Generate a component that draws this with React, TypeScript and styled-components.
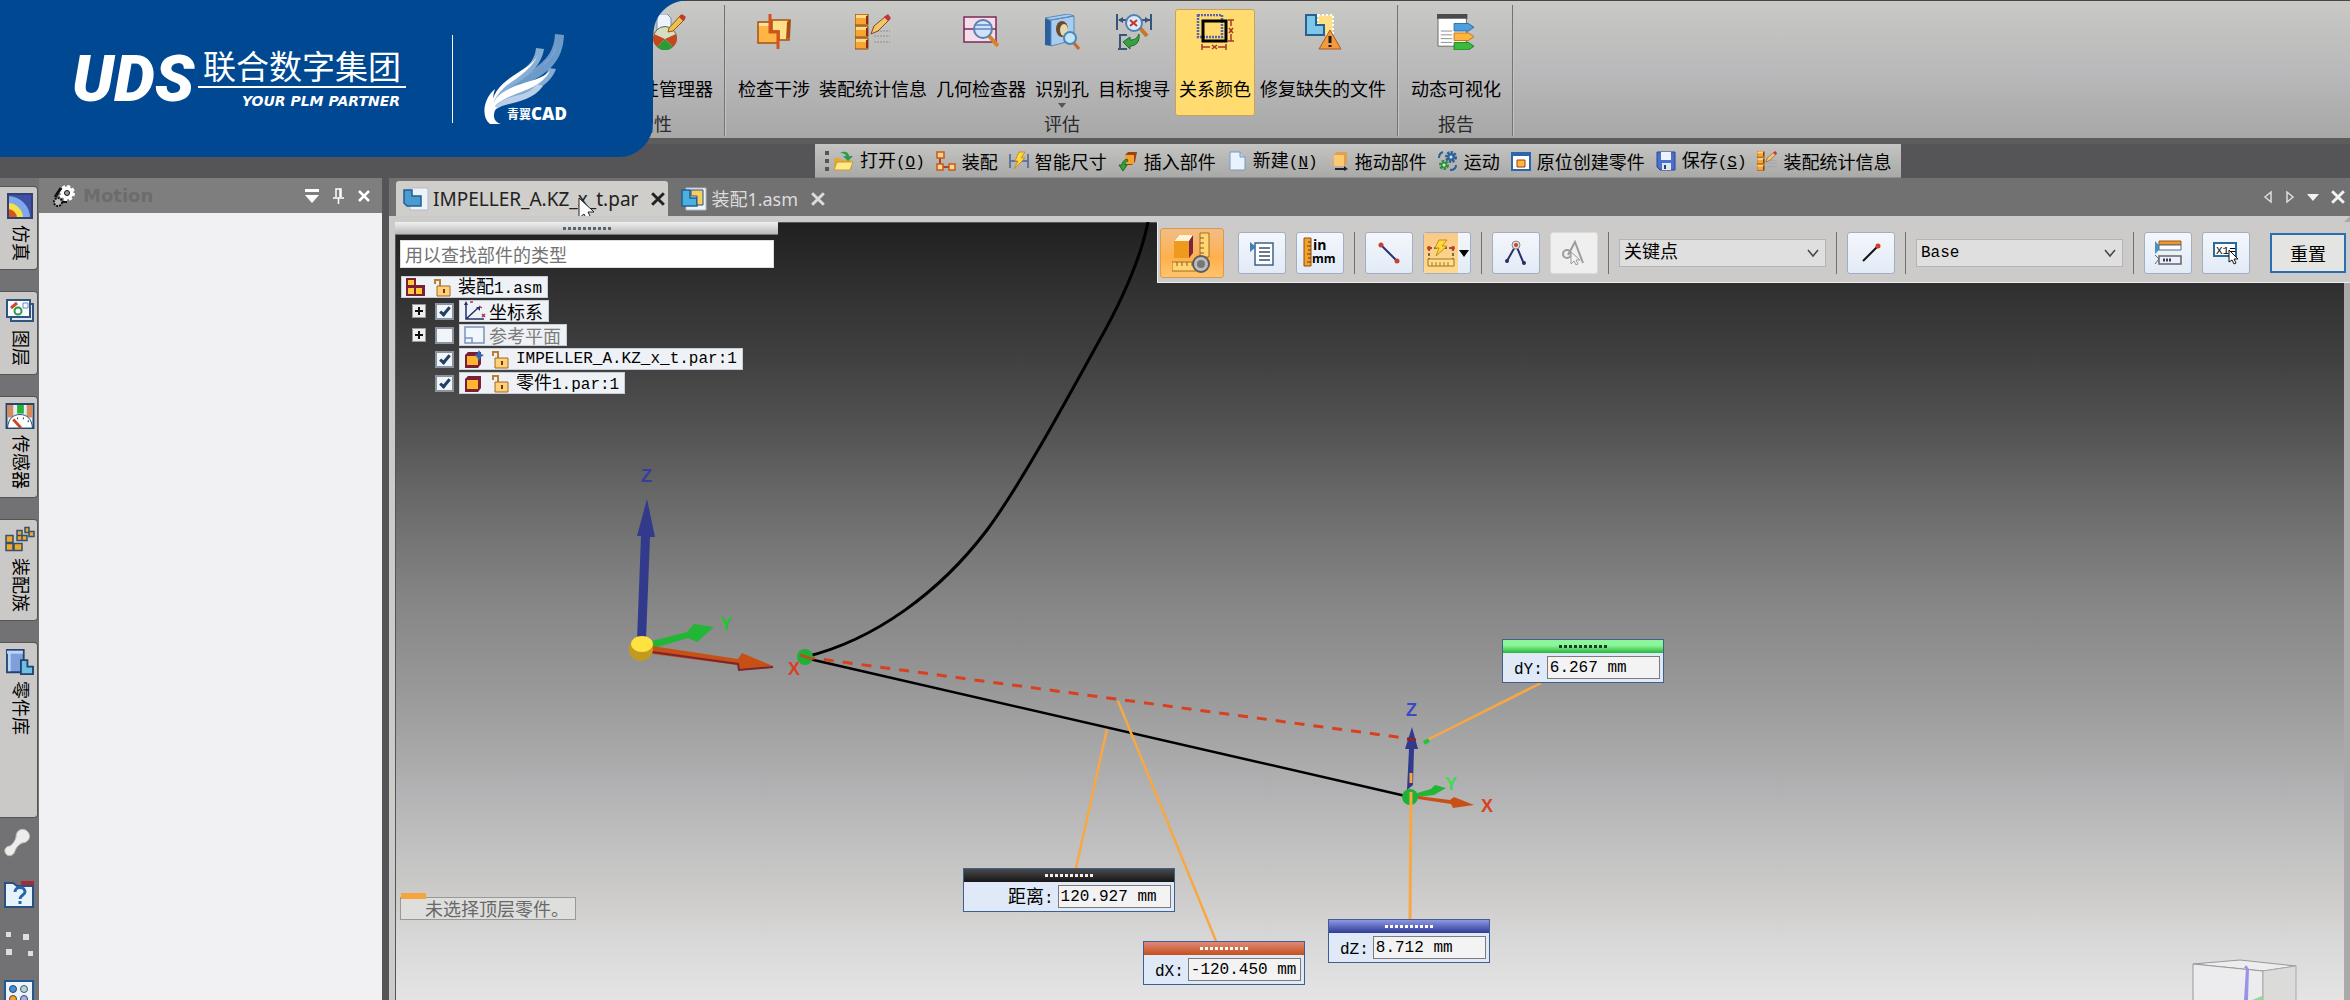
import React from "react";
import styled, { createGlobalStyle, css } from "styled-components";

const UI = `"Noto Sans CJK SC", sans-serif`;
const MONO = `"Liberation Mono", "Noto Sans CJK SC", monospace`;

const GlobalStyle = createGlobalStyle`
  *, *::before, *::after { box-sizing: border-box; }
  body { margin: 0; font-family: ${UI}; font-size: 18px; line-height: 24px; color: #000; }
  button, input, select { font: inherit; color: inherit; margin: 0; }
  button { border: 0; background: none; padding: 0; cursor: default; }
  svg { display: block; flex: none; }
`;

/* ---------- frame ---------- */
const Shell = styled.div`
  position: relative;
  display: flex;
  flex-direction: column;
  height: 100vh;
  overflow: hidden;
  background: #555557;
`;
const Mono = styled.span`
  font-family: ${MONO};
  font-size: 16px;
`;

/* ---------- brand banner ---------- */
const Banner = styled.header`
  position: absolute;
  z-index: 5;
  top: 0;
  left: 0;
  width: 653px;
  height: 157px;
  padding-left: 72px;
  display: flex;
  align-items: center;
  background: #004891;
  border-bottom-right-radius: 34px;
  color: #fff;
  &::after {
    content: "";
    position: absolute;
    top: 0;
    left: 100%;
    width: 34px;
    height: 34px;
    background: radial-gradient(circle at 100% 100%, transparent 33px, #004891 34px);
  }
`;
const Uds = styled.strong`
  width: 126px;
  font: italic 900 65px/72px Roboto, "Liberation Sans", sans-serif;
`;
const Company = styled.div`
  width: 208px;
  text-align: center;
`;
const CompanyName = styled.div`
  font-size: 33px;
  line-height: 42px;
  border-bottom: 2px solid #fff;
`;
const Slogan = styled.div`
  padding-right: 6px;
  text-align: right;
  white-space: nowrap;
  font: italic 700 14px/26px "DejaVu Sans", sans-serif;
`;
const BannerRule = styled.div`
  width: 1px;
  height: 88px;
  margin: 0 30px 0 46px;
  background: #fff;
`;
const CadLogo = styled.div`
  position: relative;
`;
const CadName = styled.div`
  position: absolute;
  left: 24px;
  bottom: 2px;
  display: flex;
  align-items: center;
  white-space: nowrap;
  font-size: 12px;
  font-weight: 700;
  line-height: 18px;
  b { font: 800 17px/18px "Open Sans", sans-serif; }
`;

/* ---------- ribbon ---------- */
const Ribbon = styled.nav`
  display: flex;
  flex: none;
  height: 144px;
  padding: 4px 0 2px 584px;
  border-top: 1px solid #4a4446;
  border-bottom: 6px solid #5c5c5d;
  background: linear-gradient(#c9c9c6, #bfbfbe 30%, #b8b8ba 55%, #a7a7a6);
`;
const Group = styled.section<{ $first?: boolean }>`
  display: flex;
  flex-direction: column;
  align-items: center;
  padding: 4px 7px 0 9px;
  border-right: 1px solid #747474;
  box-shadow: 1px 0 #c4c4c4;
  ${(p) => p.$first && css`width: 141px; padding: 4px 7px 0; > div { align-self: flex-end; }`}
`;
const GroupItems = styled.div`
  display: flex;
  gap: 1px;
`;
const GroupLabel = styled.h2`
  margin: -2px 0 0;
  font-size: 18px;
  font-weight: 400;
  line-height: 18px;
  color: #2b2b2b;
`;
const RibbonButton = styled.button<{ $on?: boolean }>`
  display: flex;
  flex-direction: column;
  align-items: center;
  height: 107px;
  padding: 4px 3px 0;
  border: 1px solid transparent;
  border-radius: 3px;
  white-space: nowrap;
  ${(p) => p.$on && css`background: #ffdb70; border-color: #c9a15c;`}
  > svg { height: 36px; }
  > span { margin-top: 26px; }
`;
const DropMark = styled.i`
  margin-top: 3px;
  border: 4px solid transparent;
  border-top: 5px solid #555;
  border-bottom: 0;
`;

/* ---------- quick access bar ---------- */
const QuickRow = styled.div`
  display: flex;
  flex: none;
  padding-left: 815px;
`;
const QuickBar = styled.div`
  display: flex;
  align-items: center;
  gap: 11px;
  height: 34px;
  padding: 0 10px;
  background: linear-gradient(#c4c4c2, #a9a9a7);
  border-bottom: 1px solid #8d8d8d;
`;
const Grip = styled.i`
  width: 4px;
  height: 20px;
  margin-right: -6px;
  background: repeating-linear-gradient(#555 0 4px, transparent 4px 8px);
`;
const QuickButton = styled.button`
  display: flex;
  align-items: center;
  gap: 6px;
  white-space: nowrap;
`;

/* ---------- side strip ---------- */
const Body = styled.div`
  display: flex;
  flex: 1;
  min-height: 0;
`;
const Strip = styled.aside`
  display: flex;
  flex-direction: column;
  flex: none;
  gap: 21px;
  width: 39px;
  padding-top: 8px;
  background: #727274;
`;
const StripTab = styled.button<{ $tall?: boolean }>`
  display: flex;
  flex-direction: column;
  align-items: center;
  flex: none;
  gap: 6px;
  width: 38px;
  padding: 6px 2px 8px 4px;
  border: 1px solid #555;
  border-left: 0;
  border-radius: 0 4px 4px 0;
  background: #cbc9c8;
  ${(p) => p.$tall && css`padding-bottom: 82px;`}
  svg { height: 26px; }
  span { margin-left: 4px; writing-mode: vertical-rl; text-orientation: sideways; }
`;
const StripTools = styled.div`
  display: flex;
  flex-direction: column;
  align-items: flex-start;
  gap: 22px;
  margin-top: -11px;
  padding-left: 4px;
`;
const Panel = styled.section`
  flex: none;
  width: 343px;
  background: #f1f1f3;
`;
const PanelHead = styled.div`
  display: flex;
  align-items: center;
  gap: 14px;
  height: 35px;
  padding: 0 12px 0 14px;
  background: #7e7e7e;
  color: #fff;
  h2 {
    flex: 1;
    margin: 0 0 0 -6px;
    font: 700 18px/24px "DejaVu Sans", sans-serif;
    color: #6c6c6d;
  }
`;
const Splitter = styled.div`
  flex: none;
  width: 7px;
  background: #555557;
`;

/* ---------- documents ---------- */
const Docs = styled.main`
  display: flex;
  flex-direction: column;
  flex: 1;
  min-width: 0;
`;
const DocTabs = styled.div`
  display: flex;
  align-items: flex-end;
  flex: none;
  height: 38px;
  padding-left: 7px;
  background: #717172;
`;
const DocTab = styled.div<{ $on?: boolean }>`
  position: relative;
  display: flex;
  align-items: center;
  gap: 4px;
  height: 35px;
  padding: 0 3px 0 13px;
  border-radius: 3px 3px 0 0;
  color: #dcdcdc;
  font-family: "Noto Sans", "Noto Sans CJK SC", sans-serif;
  font-size: 18px;
  ${(p) => p.$on && css`padding-left: 7px; background: #cfcecb; color: #222; font-size: 19px;`}
  > button:last-of-type { margin-left: 9px; }
`;
const Pointer = styled.svg`
  position: absolute;
  left: 182px;
  top: 16px;
`;
const TabNav = styled.div`
  display: flex;
  align-items: center;
  align-self: center;
  gap: 12px;
  margin-left: auto;
  padding-right: 5px;
`;
const Frame = styled.div`
  position: relative;
  flex: 1;
  min-height: 0;
  border: 6px solid #cbcbc9;
  border-right-color: #a9a9a9;
  border-bottom: 0;
  box-shadow: inset 1px 1px #555;
  background: linear-gradient(
    #202021, #333 10%, #3f3f40 17%, #4b4b4c 23%, #565657 28%, #656566 34%, #757576 41%,
    #868687 49%, #939393 57%, #a2a2a2 65%, #b2b2b4 73%, #bebebe 79%, #cccbca 86%, #dcdbdb 94%, #e4e4e4
  );
`;
const Scene = styled.svg`
  position: absolute;
  inset: 0;
  width: 100%;
  height: 100%;
`;

/* ---------- model tree ---------- */
const Tree = styled.div`
  position: relative;
  width: 383px;
`;
const TreeHandle = styled.div`
  display: flex;
  align-items: center;
  justify-content: center;
  height: 13px;
  border-bottom: 1px solid #777;
  background: linear-gradient(#f0f0f0, #b9b9b9);
`;
const Dots = styled.i<{ $color: string }>`
  width: 48px;
  height: 3px;
  background: repeating-linear-gradient(90deg, ${(p) => p.$color} 0 3px, transparent 3px 5px);
`;
const Search = styled.input`
  display: block;
  width: 374px;
  height: 28px;
  margin: 5px 0 8px 5px;
  padding: 0 4px;
  border: 1px solid #ddd;
  background: #fff;
  &::placeholder { color: #737373; opacity: 1; }
`;
const Rows = styled.ul`
  display: flex;
  flex-direction: column;
  gap: 2px;
  margin: 0;
  padding: 0 0 0 6px;
  list-style: none;
`;
const Row = styled.li<{ $depth?: number }>`
  display: flex;
  align-items: center;
  height: 22px;
  padding-left: ${(p) => (p.$depth ?? 0) * 11}px;
`;
const Expand = styled.button`
  position: relative;
  width: 14px;
  height: 14px;
  margin-right: 9px;
  border: 1px solid #999;
  background: #eee;
  &::before, &::after { content: ""; position: absolute; background: #111; }
  &::before { left: 2px; right: 2px; top: 5px; height: 2px; }
  &::after { top: 2px; bottom: 2px; left: 5px; width: 2px; }
`;
const Tick = styled.input`
  display: grid;
  place-items: center;
  appearance: none;
  width: 19px;
  height: 17px;
  margin: 0 5px 0 0;
  border: 2px solid #8a94a0;
  background: #f2f5f8;
  &:checked::after {
    content: "";
    width: 6px;
    height: 11px;
    border: solid #1f4066;
    border-width: 0 3px 3px 0;
    transform: translateY(-1px) rotate(40deg);
  }
`;
const Tag = styled.label<{ $dim?: boolean }>`
  display: flex;
  align-items: center;
  gap: 7px;
  height: 22px;
  padding: 0 5px 0 4px;
  background: #eef1f5;
  border: 1px solid #c8cdd3;
  line-height: 20px;
  white-space: nowrap;
  ${(p) => p.$dim && css`color: #7d7d7d;`}
`;
/* Tags whose icon sits tight against the name. */
const TightTag = styled(Tag)`
  gap: 3px;
`;
const RowPad = styled.span`
  width: 23px;
`;
const Status = styled.div`
  position: absolute;
  left: 5px;
  bottom: 80px;
  padding: 0 6px 0 24px;
  border: 1px solid #999;
  background: #dededd;
  color: #686868;
  line-height: 21px;
  &::before {
    content: "";
    position: absolute;
    left: 0;
    top: -5px;
    width: 25px;
    height: 6px;
    background: #f4a63c;
  }
`;

/* ---------- measure toolbar ---------- */
const MeasureBar = styled.div`
  position: absolute;
  top: 0;
  right: -6px;
  display: flex;
  align-items: center;
  gap: 10px;
  height: 61px;
  padding: 2px 4px 0 2px;
  background: #cccbca;
  border-left: 1px solid #eee;
  border-bottom: 1px solid #eee;
`;
const Tool = styled.button<{ $off?: boolean; $hot?: boolean }>`
  display: flex;
  align-items: center;
  justify-content: center;
  width: 48px;
  height: 42px;
  border: 1px solid #9fb0c6;
  border-radius: 3px;
  background: linear-gradient(#f4f6fb, #e2ebf6);
  ${(p) => p.$off && css`background: #efefef; border-color: #dadada;`}
  ${(p) => p.$hot && css`
    width: 64px;
    height: 50px;
    margin-right: 4px;
    border-color: #d79a4e;
    background: linear-gradient(#f1bd86, #ffb04c 60%, #ffc46e);
  `}
`;
const SplitFace = styled.span`
  display: flex;
  align-items: center;
  justify-content: center;
  width: 34px;
  height: 40px;
  background: linear-gradient(#f9c988, #ffd98c);
  & + i { margin: 0 1px; border: 5px solid transparent; border-top: 7px solid #000; border-bottom: 0; }
`;
const Sep = styled.i`
  width: 1px;
  height: 42px;
  background: #6f6f6f;
`;
const Picker = styled.label`
  position: relative;
  display: flex;
  align-items: center;
  select {
    appearance: none;
    width: 207px;
    height: 28px;
    padding: 0 4px;
    border: 1px solid #b4b4b4;
    border-radius: 0;
    background: #dfdfdf;
    font-family: ${MONO};
    font-size: 18px;
  }
  svg { position: absolute; right: 6px; }
`;
const LatinPicker = styled(Picker)`
  select { font-size: 16px; }
`;
const ResetButton = styled.button`
  width: 76px;
  height: 40px;
  margin-left: 10px;
  border: 2px solid #2a6db0;
  background: #e4e4e3;
`;

/* ---------- dimension callouts ---------- */
const Callout = styled.div<{ $x: number; $y: number; $head: string }>`
  position: absolute;
  left: ${(p) => p.$x}px;
  top: ${(p) => p.$y}px;
  border: 1px solid #3f5f8f;
  background: #dfe9f7;
  > div { display: flex; justify-content: center; align-items: center; height: 13px; background: ${(p) => p.$head}; }
`;
const CalloutField = styled.label<{ $pad: number }>`
  display: flex;
  align-items: center;
  gap: 4px;
  height: 29px;
  padding: 0 3px 0 ${(p) => p.$pad}px;
  white-space: nowrap;
  input {
    width: 113px;
    height: 23px;
    padding: 0 2px;
    border: 1px solid #7b7b7b;
    background: #f3f3f4;
    font-family: ${MONO};
    font-size: 16px;
  }
`;

/* ---------- icons ---------- */
type IconProps = { w?: number; h?: number; box: string; children: React.ReactNode };
const Icon = ({ w = 20, h = w, box, children }: IconProps) => (
  <svg width={w} height={h} viewBox={box} aria-hidden="true">{children}</svg>
);
const B36 = "0 0 36 36";
const B20 = "0 0 20 20";
const B30 = "0 0 30 28";

const PropertyIcon = () => (
  <Icon w={36} box={B36}>
    <path d="M7 0h10l4 4v14H7z" fill="#eef4ff" stroke="#6e8db5" />
    <circle cx="15" cy="24" r="11.500" fill="#d9dcc0" stroke="#5a6f3b" />
    <path d="M4 20l11 5-8 8a11 11 0 01-3-13zM26 20l-11 5 8 8a11 11 0 003-13z" fill="#c4481f" />
    <path d="M15 25l8 8a11 11 0 01-16 0z" fill="#2e9a35" />
    <path d="M19 14L31 1l4 4-12 12-5 1z" fill="#f0c14a" stroke="#8a5a1a" />
    <path d="M29 3l3-3 4 3-3 4z" fill="#c33a2c" />
  </Icon>
);
const InterferenceIcon = () => (
  <Icon w={36} box={B36}>
    <path d="M2 8h13v9h7v12H2z" fill="#ffb545" stroke="#a9500f" strokeWidth="1.500" />
    <path d="M3 9h11v3H3z" fill="#ffe2a8" />
    <path d="M16 6h17v20H23v-9h-7z" fill="#ffe08a" stroke="#a9500f" strokeWidth="1.500" />
    <path d="M31 8l4-3-1 18-4 3z" fill="#a9500f" />
    <path d="M14 0v18h8v17" fill="none" stroke="#d2521a" strokeWidth="3" />
  </Icon>
);
const StatsIcon = ({ size = 36 }: { size?: number }) => (
  <Icon w={size} box={B36}>
    {[0, 12, 24].map((y) => (
      <g key={y}>
        <path d={`M0 ${y}h13v11H0z`} fill="#f7a52c" stroke="#8a4a14" />
        <path d={`M1 ${y + 1}h11v3H1z`} fill="#ffd98a" />
        <path d={`M11 ${y + 2}h2v8h-2z`} fill="#8b2c1a" />
      </g>
    ))}
    <path d="M19 17h16M19 22h16M19 28h16" stroke="#8a8f96" strokeDasharray="2 1" />
    <path d="M16 20l3-8L31 2l4 3-12 12z" fill="#f3c66a" stroke="#7c4a1d" />
    <path d="M29 3l4-3 3 4-3 3z" fill="#c8323c" />
  </Icon>
);
const GeometryIcon = () => (
  <Icon w={36} box={B36}>
    <path d="M1 3h32v25H1zM1 15h32" fill="#f4dfe8" stroke="#7a2a5c" strokeWidth="1.500" />
    <path d="M26 22l9 10" stroke="#d9822b" strokeWidth="4" />
    <circle cx="20" cy="15" r="9" fill="#cfe2f8" stroke="#5b7fae" strokeWidth="2" />
    <path d="M12 15h16M13 11h14" stroke="#7a9cd0" strokeWidth="2" />
  </Icon>
);
const HoleIcon = () => (
  <Icon w={36} box={B36}>
    <path d="M1 4l6 3v25l-6-1z" fill="#2a5f9c" />
    <path d="M1 4L24 0l6 2L7 6zM7 6l23-4v24L7 32z" fill="#a9cdf0" stroke="#5b89bb" />
    <ellipse cx="18" cy="15" rx="6" ry="8" fill="#6b4a2c" />
    <ellipse cx="20" cy="16" rx="4" ry="6" fill="#e5d7b0" />
    <path d="M30 29l5 6" stroke="#c46a2a" strokeWidth="3" />
    <circle cx="26" cy="24" r="6" fill="#bfe5fa" stroke="#4f86b6" strokeWidth="2" />
  </Icon>
);
const GoalIcon = () => (
  <Icon w={36} box={B36}>
    <path d="M1 0v16M35 0v16M3 6h8M25 6h9M4 20v15M4 21h7M2 35h9" stroke="#37557a" strokeWidth="2" />
    <path d="M2 6l5-3v6zM34 6l-5-3v6z" fill="#37557a" />
    <path d="M24 14l7 8" stroke="#c8772a" strokeWidth="4" />
    <circle cx="18" cy="9" r="8" fill="#d6ebfb" stroke="#5380b3" strokeWidth="2" />
    <path d="M14 6l7 6M21 6l-7 6" stroke="#c43325" strokeWidth="2" />
    <path d="M7 28l7-5v3c5 0 7-2 9-6 1 8-3 12-9 12v3z" fill="#36a044" stroke="#1e6b2a" />
  </Icon>
);
const RelationIcon = () => (
  <Icon w={38} h={36} box="0 0 38 36">
    <path d="M2 1h24v22H2z" fill="none" stroke="#5a63ad" strokeWidth="2.500" strokeDasharray="2 1" />
    <path d="M7 7h23v20H7z" fill="none" stroke="#000" strokeWidth="3" />
    <path d="M32 6h6M35 6v6M32 27h6M35 20v7M6 30v6M6 33h8M30 30v6M22 33h8M33 14l4 5M37 14l-4 5M16 31l5 4M21 31l-5 4" stroke="#a53a22" strokeWidth="1.500" />
  </Icon>
);
const RepairIcon = () => (
  <Icon w={36} box={B36}>
    <path d="M13 1h15v20H13z" fill="#ffe088" stroke="#fff" strokeWidth="2" strokeDasharray="2 2" />
    <path d="M1 1h10v10h8v10H1z" fill="#7ec7ea" stroke="#27618f" strokeWidth="2" />
    <path d="M25 16l11 19H14z" fill="#f39a3a" stroke="#b4561b" />
    <path d="M25 22v7M25 31v2" stroke="#1b1b1b" strokeWidth="3" />
  </Icon>
);
const VisualIcon = () => (
  <Icon w={40} h={36} box="0 0 40 38">
    <path d="M1 1h30v33H1z" fill="#fff" stroke="#666" />
    <path d="M0 0h32v5H0z" fill="#4b4b4b" />
    <path d="M4 18h12M4 22h12M4 26h12M4 30h12" stroke="#8b8b8b" />
    <path d="M18 10h15l6 4-6 4H18z" fill="#4f9fdc" stroke="#2b6da6" />
    <path d="M18 20h15l6 4-6 4H18z" fill="#ffb63a" stroke="#b8741c" />
    <path d="M18 30h15l6 4-6 4H18z" fill="#3cba3c" stroke="#1e7a24" />
  </Icon>
);

const OpenIcon = () => (
  <Icon box={B20}>
    <path d="M0 7h6l2 2h9v10H0z" fill="#e0a93a" />
    <path d="M3 11h16l-3 8H0z" fill="#ffe98a" stroke="#c79a2e" />
    <path d="M6 2c5-3 9 0 9 3h4l-5 5-5-5h3c0-2-3-3-6-3z" fill="#2f9a45" />
  </Icon>
);
const AssemblyIcon = () => (
  <Icon box={B20}>
    <path d="M4 6v10h10" fill="none" stroke="#b5411d" strokeWidth="2" />
    <path d="M1 1h7v6H1zM1 13h6v6H1zM13 13h6v6h-6z" fill="#ffd58a" stroke="#c55a1a" strokeWidth="1.500" />
  </Icon>
);
const SmartIcon = () => (
  <Icon box={B20}>
    <path d="M1 3v14M19 3v14M2 10h16" stroke="#4a5f9a" strokeWidth="1.500" />
    <path d="M10 1h6l-4 6h4L5 18l4-8H6z" fill="#ffd83a" stroke="#c8921c" />
  </Icon>
);
const InsertIcon = () => (
  <Icon box={B20}>
    <path d="M7 4l3-3h9l-2 10-3 3H7z" fill="#9c4316" />
    <path d="M7 4h9v9H7z" fill="#f5a032" />
    <path d="M9 8c-3 1-5 3-5 6H1l4 6 4-6H7c0-2 1-4 3-4z" fill="#36a23a" stroke="#1c6b25" />
  </Icon>
);
const NewIcon = () => (
  <Icon box={B20}>
    <path d="M3 1h10l5 5v13H3z" fill="#e8f3ff" stroke="#7a97ba" />
    <path d="M13 1v5h5" fill="#b9d3ee" stroke="#7a97ba" />
  </Icon>
);
const DragIcon = () => (
  <Icon box={B20}>
    <path d="M5 3l3-2h10v11l-3 3H5z" fill="#e0a050" />
    <path d="M5 4h10v11H5z" fill="#ffc870" />
    <path d="M2 5v11" stroke="#e7b27a" />
    <path d="M6 17h9v-2l4 3-4 2v-1H6z" fill="#222" />
  </Icon>
);
const MotionIcon = () => (
  <Icon box={B20}>
    <circle cx="13" cy="6" r="4" fill="#3a6ea8" stroke="#2d5f95" strokeWidth="4" strokeDasharray="2 1" />
    <circle cx="13" cy="6" r="1.500" fill="#cfe0f0" />
    <circle cx="6" cy="14" r="3" fill="#35a046" stroke="#2c8a3c" strokeWidth="4" strokeDasharray="2 1" />
    <circle cx="6" cy="14" r="1.500" fill="#d0ecd4" />
    <path d="M1 7c0-3 1-5 4-6M12 19c4 0 6-2 6-5" fill="none" stroke="#2d5f95" strokeWidth="2" />
  </Icon>
);
const CreateIcon = () => (
  <Icon box={B20}>
    <path d="M1 2h18v17H1z" fill="#fff" stroke="#2c67ad" strokeWidth="2" />
    <path d="M1 1h18v4H1z" fill="#2c67ad" />
    <path d="M6 9h8v7H6z" fill="#ffb83a" stroke="#9a3e1c" />
  </Icon>
);
const SaveIcon = () => (
  <Icon box={B20}>
    <path d="M1 1h18v18H4l-3-3z" fill="#4a6fd0" stroke="#2b4795" />
    <path d="M5 1h10v8H5z" fill="#eef3ff" />
    <path d="M6 12h9v7H6z" fill="#dfe5ee" />
    <path d="M8 14h2v4H8z" fill="#24407f" />
  </Icon>
);

const SimTabIcon = () => (
  <Icon w={26} box="0 0 26 26">
    <path d="M1 1h24v24H1z" fill="#3f4fa8" />
    <path d="M1 3a22 22 0 0122 22H1z" fill="#7fa8e8" />
    <path d="M1 10a15 15 0 0115 15H1z" fill="#f7e04a" />
    <path d="M1 16a9 9 0 019 9H1z" fill="#d6541c" />
    <path d="M1 1h24v24H1z" fill="none" stroke="#34406f" strokeWidth="2" />
  </Icon>
);
const LayerTabIcon = () => (
  <Icon w={28} h={24} box="0 0 28 24">
    <path d="M5 5h22v17H5z" fill="#dfe8f2" stroke="#2f557f" strokeWidth="2" />
    <path d="M1 1h23v17H1z" fill="#f7faff" stroke="#2f557f" strokeWidth="2" />
    <path d="M5 9l6-5" stroke="#c94a2c" strokeWidth="3" />
    <circle cx="12" cy="12" r="3.500" fill="none" stroke="#2f9a45" strokeWidth="2" />
    <path d="M17 4h5v5h-5z" fill="none" stroke="#6b8cc0" />
  </Icon>
);
const SensorTabIcon = () => (
  <Icon w={30} h={27} box="0 0 30 27">
    <path d="M1 1h28v25H1z" fill="#dff0f5" stroke="#24466f" strokeWidth="2" />
    <path d="M2 2h6v13H2zM22 2h6v13h-6z" fill="#d98a58" />
    <path d="M12 2h7v9h-7z" fill="#27b23a" />
    <path d="M2 26c1-10 6-14 13-14s12 4 13 14z" fill="#fff" stroke="#24466f" />
    <path d="M8 17l8 9" stroke="#c04a2a" strokeWidth="3" />
    <path d="M12 16h1M18 16h1M23 19h1" stroke="#222" strokeWidth="2" />
  </Icon>
);
const FamilyTabIcon = () => (
  <Icon w={30} h={25} box="0 0 30 25">
    <g fill="#f0a72e" stroke="#33506f" strokeWidth="1.500">
      <path d="M1 9h7v7H1zM1 17h7v7H1zM9 17h8v7H9zM12 4h5v5h-5zM12 9h5v5h-5zM17 9h5v5h-5zM20 1h4v5h-4zM24 5h5v5h-5z" />
    </g>
  </Icon>
);
const PartsTabIcon = () => (
  <Icon w={30} h={28} box={B30}>
    <path d="M1 1h18v24H1z" fill="#7f9fdc" stroke="#23436f" strokeWidth="2" />
    <path d="M1 2h17v3H1zM2 5h3v19H2z" fill="#b9d4f4" />
    <path d="M16 12h7v7h6v8H16z" fill="#6cc0e6" stroke="#23436f" strokeWidth="2" />
  </Icon>
);
const BoneIcon = () => (
  <Icon w={28} h={30} box="0 0 28 30">
    <path d="M12 9c0-8 8-10 12-5 4 5 0 11-6 11-4 2-6 5-7 8-1 5-7 6-9 3-3-4 0-8 4-8 3-2 5-5 6-9z" fill="#ededeb" stroke="#b5b5b3" />
  </Icon>
);
const HelpIcon = () => (
  <Icon w={30} h={28} box={B30}>
    <path d="M1 3h8l4 3h16v21H1z" fill="#e6f3fb" stroke="#2b4f80" strokeWidth="2" />
    <path d="M17 1h13v4H17z" fill="#a42a3a" />
    <path d="M11 12c0-6 10-6 10 0 0 3-5 3-5 7M16 21v3" fill="none" stroke="#2566ae" strokeWidth="3" />
  </Icon>
);
const PointsIcon = () => (
  <Icon w={30} h={28} box={B30}>
    <path d="M2 2h5v5H2zM19 4h6v6h-6zM2 19h6v6H2zM24 21h5v5h-5z" fill="#dededc" />
  </Icon>
);
const PaletteIcon = () => (
  <Icon w={30} h={28} box={B30}>
    <path d="M1 1h28v26H1z" fill="#e9f4fc" stroke="#23588f" strokeWidth="2" />
    <circle cx="9" cy="9" r="3.500" fill="#3f8fd8" stroke="#345" />
    <circle cx="20" cy="9" r="3.500" fill="#b9d0d8" stroke="#456" />
    <circle cx="9" cy="19" r="3.500" fill="#f2a52c" stroke="#543" />
    <circle cx="20" cy="19" r="3.500" fill="#a9aee8" stroke="#446" />
  </Icon>
);
const GearsIcon = () => (
  <Icon w={22} box="0 0 22 22">
    <circle cx="14" cy="8" r="6.500" fill="#fff" stroke="#fff" strokeWidth="3" strokeDasharray="3 2" />
    <circle cx="14" cy="8" r="2.500" fill="#999" stroke="#111" />
    <circle cx="5" cy="17" r="4" fill="#bbb" stroke="#111" strokeWidth="2" strokeDasharray="2 1" />
    <path d="M2 12l6-9" stroke="#111" strokeWidth="3" />
    <path d="M9 17h5" stroke="#111" strokeWidth="2" />
  </Icon>
);
const Cross = ({ size = 12 }: { size?: number }) => (
  <Icon w={size} box="0 0 12 12">
    <path d="M1 1l10 10M11 1L1 11" stroke="currentColor" strokeWidth="2.500" />
  </Icon>
);
const PartDocIcon = () => (
  <Icon w={26} h={24} box="0 0 26 24">
    <path d="M7 1h18v22H7z" fill="#eef3f8" stroke="#b0bccb" />
    <path d="M1 3h8v6h9v10H4l-3-3z" fill="#4a9bd0" stroke="#1f5f96" strokeWidth="1.500" />
  </Icon>
);
const AsmDocIcon = () => (
  <Icon w={26} h={24} box="0 0 26 24">
    <path d="M5 1h20v22H5z" fill="#eef3f8" stroke="#b0bccb" />
    <path d="M1 3h8v8h7v8H1z" fill="#4ab0e0" stroke="#1f5f96" strokeWidth="1.500" />
    <path d="M10 3h12v15h-6v-9h-6z" fill="#f5cf5a" stroke="#24507c" />
  </Icon>
);
const AsmTreeIcon = () => (
  <Icon w={20} h={18} box="0 0 20 18">
    <path d="M0 0h10v7h9v11H0z" fill="#7b1f35" />
    <path d="M2 2h6v5H2zM2 10h6v6H2zM10 10h6v6h-6z" fill="#ffc93c" />
  </Icon>
);
const LockIcon = () => (
  <Icon w={18} h={19} box="0 0 18 19">
    <path d="M2 6V2h5v6" fill="none" stroke="#b7812e" strokeWidth="2" />
    <path d="M4 8h13v10H4z" fill="#ffd077" stroke="#a5692a" />
    <path d="M10 11h2v4h-2z" fill="#6b3a12" />
  </Icon>
);
const CoordIcon = () => (
  <Icon w={22} h={20} box="0 0 22 20">
    <path d="M2 2v16h18M2 18L14 7" fill="none" stroke="#23306b" strokeWidth="1.500" />
    <path d="M12 6h4v4zM0 4l2-4 2 4z" fill="#23306b" />
    <path d="M6 1h3M15 5l3 2M18 13l3 3M21 13l-3 3" stroke="#b03050" strokeWidth="1.500" />
  </Icon>
);
const PlaneIcon = () => (
  <Icon w={22} h={18} box="0 0 22 18">
    <path d="M1 1h19v16H1zM1 12h7v5" fill="#f2f7ff" stroke="#7b93b8" strokeWidth="1.500" />
  </Icon>
);
const PartTreeIcon = ({ mark }: { mark?: boolean }) => (
  <Icon w={20} h={18} box="0 0 20 18">
    <path d="M1 5l3-3h13v12l-3 4H1z" fill="#7b1f35" />
    <path d="M3 6h11v9H3z" fill="#ffb52e" />
    {mark && <path d="M15 0l2 4 3 1-3 2-2 4-2-4-3-2 3-1z" fill="#2f67b5" />}
  </Icon>
);

/* ---------- data ---------- */
const evaluate = [
  { label: "检查干涉", icon: <InterferenceIcon /> },
  { label: "装配统计信息", icon: <StatsIcon /> },
  { label: "几何检查器", icon: <GeometryIcon /> },
  { label: "识别孔", icon: <HoleIcon />, drop: true },
  { label: "目标搜寻", icon: <GoalIcon /> },
  { label: "关系颜色", icon: <RelationIcon />, on: true },
  { label: "修复缺失的文件", icon: <RepairIcon /> },
];
const quick = [
  { label: "打开", hot: "O", icon: <OpenIcon /> },
  { label: "装配", icon: <AssemblyIcon /> },
  { label: "智能尺寸", icon: <SmartIcon /> },
  { label: "插入部件", icon: <InsertIcon /> },
  { label: "新建", hot: "N", icon: <NewIcon /> },
  { label: "拖动部件", icon: <DragIcon /> },
  { label: "运动", icon: <MotionIcon /> },
  { label: "原位创建零件", icon: <CreateIcon /> },
  { label: "保存", hot: "S", icon: <SaveIcon /> },
  { label: "装配统计信息", icon: <StatsIcon size={20} /> },
];
const strip = [
  { label: "仿真", icon: <SimTabIcon /> },
  { label: "图层", icon: <LayerTabIcon /> },
  { label: "传感器", icon: <SensorTabIcon /> },
  { label: "装配族", icon: <FamilyTabIcon /> },
  { label: "零件库", icon: <PartsTabIcon />, tall: true },
];
const callouts = [
  { id: "dist", label: "距离", value: "120.927 mm", x: 568, y: 646, pad: 44, head: "linear-gradient(#4a4a4a, #161616)", dots: "#eee" },
  { id: "dx", label: "dX", value: "-120.450 mm", x: 748, y: 719, pad: 11, head: "linear-gradient(#e08a7c, #c4501a)", dots: "#fff" },
  { id: "dz", label: "dZ", value: "8.712 mm", x: 933, y: 697, pad: 11, head: "linear-gradient(#8f97e6, #2f3c94)", dots: "#fff" },
  { id: "dy", label: "dY", value: "6.267 mm", x: 1107, y: 417, pad: 11, head: "linear-gradient(#8cf79a 40%, #27b53a)", dots: "#1c3a2a" },
];

const Chevron = () => (
  <Icon w={14} h={10} box="0 0 14 10">
    <path d="M2 2l5 6 5-6" fill="none" stroke="#444" strokeWidth="1.500" />
  </Icon>
);

/* Scene coordinates are measured from the window and shifted to the viewport's corner. */
const SceneArt = () => (
  <Scene aria-hidden="true">
    <g transform="translate(-395 -222)" fontFamily="Liberation Sans, sans-serif" fontSize="18">
      <path d="M1148 222C1140 262 1120 304 1098 343C1074 386 1022 483 987 530C940 592 875 640 805 657" fill="none" stroke="#000" strokeWidth="3" />
      <path d="M805 658L1410 797" stroke="#000" strokeWidth="2.500" />
      <path d="M805 657L1412 739" stroke="#d8401f" strokeWidth="3" strokeDasharray="10 9" />
      <g stroke="#f7a843" strokeWidth="2.500">
        <path d="M1107 729L1076 868M1118 701L1216 941M1427 740L1541 683" />
      </g>
      <path d="M637 640L641 536H637L647 499L655 537H650L646 640z" fill="#323a8c" />
      <path d="M652 641L687 632L694 624L714 627L697 642L688 638L654 648z" fill="#21b636" />
      <path d="M652 646L738 659L742 653L773 666L740 670L738 665L652 654z" fill="#c85016" />
      <path d="M652 652L738 664L739 670L773 667" fill="none" stroke="#7b2430" strokeWidth="2" />
      <circle cx="641" cy="649" r="12" fill="#c39a20" />
      <ellipse cx="642" cy="644" rx="11" ry="8" fill="#ffe23f" />
      <circle cx="805" cy="657" r="8" fill="#1fb038" />
      <path d="M800 655l12 4" stroke="#a55a20" strokeWidth="3" />
      <g fontWeight="700">
        <text x="641" y="482" fill="#323f9c">Z</text>
        <text x="720" y="630" fill="#21c636">Y</text>
        <text x="788" y="675" fill="#d8401f">X</text>
        <text x="1406" y="716" fill="#3a49c8">Z</text>
        <text x="1445" y="790" fill="#3fdb50">Y</text>
        <text x="1481" y="812" fill="#d8401f">X</text>
      </g>

      <circle cx="1410" cy="797" r="8" fill="#1fb038" />
      <path d="M1407 790L1409 749H1405L1412 727L1418 749H1414L1413 785z" fill="#323a8c" />
      <path d="M1407 739L1416 740" stroke="#8b2430" strokeWidth="3" />
      <path d="M1417 793L1431 789L1435 785L1446 788L1434 795L1417 797z" fill="#21b636" />
      <path d="M1418 796L1450 800L1454 797L1474 805L1453 808L1451 804L1418 799z" fill="#c85016" />
      <path d="M1424 743l5-3" stroke="#21c636" strokeWidth="4" />
      <path d="M1411 773v10M1411 792L1410 919" stroke="#f7a843" strokeWidth="3" />

      <path d="M2193 964L2240 960L2296 966L2263 971z" fill="#ededee" stroke="#999" />
      <path d="M2193 964L2263 971V1002H2193z" fill="#ececee" stroke="#999" />
      <path d="M2263 971L2296 966V1002H2263z" fill="#dbdbda" stroke="#aaa" />
      <path d="M2244 1000L2246 968H2244L2246 965L2249 969L2248 1000z" fill="#9a92e6" />
      <path d="M2252 1000l10-4v4z" fill="#8ce08f" />
    </g>
  </Scene>
);

export default function App() {
  return (
    <Shell>
      <GlobalStyle />
      <Banner>
        <Uds>UDS</Uds>
        <Company>
          <CompanyName>联合数字集团</CompanyName>
          <Slogan>YOUR PLM PARTNER</Slogan>
        </Company>
        <BannerRule />
        <CadLogo>
          <Icon w={86} h={92} box="0 0 86 92">
            <path d="M72 1l9 1C80 27 67 39 45 50 27 60 15 68 8 78 12 62 26 50 44 40 62 29 71 20 72 1z" fill="#6c9ac9" />
            <path d="M74 10C72 24 60 34 44 42 28 51 14 62 8 76 13 63 27 52 46 41 62 32 72 24 74 10z" fill="#fff" />
            <path d="M53 15l8 1C58 35 42 45 28 54 18 60 11 68 8 76 9 58 22 48 36 39 46 33 52 26 53 15z" fill="#87add4" />
            <path d="M55 22C48 37 35 44 23 53 15 60 10 68 8 76 9 60 18 51 30 43 42 35 50 31 55 22z" fill="#fff" />
            <path d="M66 35l7 1C66 56 42 62 26 67 18 70 11 73 6 80 11 66 22 60 38 55 54 50 62 45 66 35z" fill="#87add4" />
            <path d="M67 38C59 53 42 57 28 63 18 67 11 72 7 80 9 66 18 59 32 53 50 47 60 45 67 38z" fill="#fff" />
            <path d="M54 51l6 2C49 69 28 69 17 74L8 79C15 68 24 65 36 62 45 60 50 56 54 51z" fill="#b9d0e8" />
            <path d="M12 56C0 66-2 84 7 91h11C10 89 9 81 14 74 10 74 9 64 12 56z" fill="#fff" />
          </Icon>
          <CadName>青翼<b>CAD</b></CadName>
        </CadLogo>
      </Banner>

      <Ribbon>
        <Group $first>
          <GroupItems>
            <RibbonButton><PropertyIcon /><span>属性管理器</span></RibbonButton>
          </GroupItems>
          <GroupLabel>属性</GroupLabel>
        </Group>
        <Group>
          <GroupItems>
            {evaluate.map((t) => (
              <RibbonButton key={t.label} $on={t.on}>
                {t.icon}
                <span>{t.label}</span>
                {t.drop && <DropMark />}
              </RibbonButton>
            ))}
          </GroupItems>
          <GroupLabel>评估</GroupLabel>
        </Group>
        <Group>
          <GroupItems>
            <RibbonButton><VisualIcon /><span>动态可视化</span></RibbonButton>
          </GroupItems>
          <GroupLabel>报告</GroupLabel>
        </Group>
      </Ribbon>

      <QuickRow>
        <QuickBar>
          <Grip />
          {quick.map((q) => (
            <QuickButton key={q.label}>
              {q.icon}
              <span>{q.label}{q.hot && <Mono>(<u>{q.hot}</u>)</Mono>}</span>
            </QuickButton>
          ))}
        </QuickBar>
      </QuickRow>

      <Body>
        <Strip>
          {strip.map((s) => (
            <StripTab key={s.label} $tall={s.tall}>{s.icon}<span>{s.label}</span></StripTab>
          ))}
          <StripTools>
            <button aria-label="连杆"><BoneIcon /></button>
            <button aria-label="帮助"><HelpIcon /></button>
            <button aria-label="点"><PointsIcon /></button>
            <button aria-label="调色板"><PaletteIcon /></button>
          </StripTools>
        </Strip>
        <Panel>
          <PanelHead>
            <GearsIcon />
            <h2>Motion</h2>
            <button aria-label="菜单">
              <Icon w={14} h={14} box="0 0 14 14"><path d="M0 0h14v3H0zM0 6h14l-7 8z" fill="#fff" /></Icon>
            </button>
            <button aria-label="固定">
              <Icon w={11} h={16} box="0 0 11 16"><path d="M3 9V1h5v8M0 10h11M5.500 10v6M7 1v8" fill="none" stroke="#fff" strokeWidth="1.500" /></Icon>
            </button>
            <button aria-label="关闭面板"><Cross /></button>
          </PanelHead>
        </Panel>
        <Splitter />

        <Docs>
          <DocTabs>
            <DocTab $on>
              <PartDocIcon />
              <span>IMPELLER_A.KZ_x_t.par</span>
              <button aria-label="关闭"><Cross size={14} /></button>
              <Pointer width="18" height="26" viewBox="0 0 18 26" aria-hidden="true">
                <path d="M1 1v20l5-4 4 8 4-2-4-8h6z" fill="#fff" stroke="#222" />
              </Pointer>
            </DocTab>
            <DocTab>
              <AsmDocIcon />
              <span>装配1.asm</span>
              <button aria-label="关闭"><Cross size={14} /></button>
            </DocTab>
            <TabNav>
              <Icon w={10} h={14} box="0 0 10 14"><path d="M8 2v10L2 7z" fill="none" stroke="#ddd" strokeWidth="1.500" /></Icon>
              <Icon w={10} h={14} box="0 0 10 14"><path d="M2 2v10l6-5z" fill="none" stroke="#ddd" strokeWidth="1.500" /></Icon>
              <Icon w={12} h={8} box="0 0 12 8"><path d="M0 1h12L6 8z" fill="#f2f2f2" /></Icon>
              <Icon w={14} h={14} box="0 0 12 12"><path d="M1 1l10 10M11 1L1 11" stroke="#f2f2f2" strokeWidth="2.500" /></Icon>
            </TabNav>
          </DocTabs>

          <Frame>
            <SceneArt />
            <Tree>
              <TreeHandle><Dots $color="#59636f" /></TreeHandle>
              <Search aria-label="查找部件" placeholder="用以查找部件的类型" />
              <Rows>
                <Row>
                  <Tag><AsmTreeIcon /><LockIcon /><span>装配<Mono>1.asm</Mono></span></Tag>
                </Row>
                <Row $depth={1}>
                  <Expand aria-label="展开坐标系" />
                  <Tick type="checkbox" id="t-csys" defaultChecked />
                  <TightTag htmlFor="t-csys"><CoordIcon />坐标系</TightTag>
                </Row>
                <Row $depth={1}>
                  <Expand aria-label="展开参考平面" />
                  <Tick type="checkbox" id="t-plane" />
                  <TightTag htmlFor="t-plane" $dim><PlaneIcon />参考平面</TightTag>
                </Row>
                <Row $depth={1}>
                  <RowPad />
                  <Tick type="checkbox" id="t-imp" defaultChecked />
                  <Tag htmlFor="t-imp"><PartTreeIcon mark /><LockIcon /><Mono>IMPELLER_A.KZ_x_t.par:1</Mono></Tag>
                </Row>
                <Row $depth={1}>
                  <RowPad />
                  <Tick type="checkbox" id="t-part" defaultChecked />
                  <Tag htmlFor="t-part"><PartTreeIcon /><LockIcon /><span>零件<Mono>1.par:1</Mono></span></Tag>
                </Row>
              </Rows>
            </Tree>

            <MeasureBar>
              <Tool $hot aria-label="测量">
                <Icon w={40} h={42} box="0 0 40 42">
                  <path d="M2 9l5-6h14v18l-4 5H2z" fill="#7d2340" />
                  <path d="M2 9h15v17H2z" fill="#f09a1c" /><path d="M2 9l5-6h14l-4 6z" fill="#fff2d5" />
                  <path d="M28 1h9v24h-9zM0 30h24v9H0z" fill="#ffd673" stroke="#a86d24" />
                  <path d="M28 6h4M28 11h4M28 16h4M28 21h4M5 30v4M10 30v4M15 30v4M20 30v4" stroke="#8a5420" />
                  <circle cx="29" cy="32" r="8" fill="#bcbcbc" stroke="#5d5d5d" strokeWidth="2" /><circle cx="29" cy="32" r="4" fill="#777" />
                </Icon>
              </Tool>
              <Tool aria-label="列表">
                <Icon w={24} h={26} box="0 0 24 26">
                  <path d="M5 3h18v22H5z" fill="#fff" stroke="#3c638c" strokeWidth="1.500" />
                  <path d="M0 2l6 5-6 5z" fill="#3f7fb5" />
                  <path d="M9 8h11M9 12h11M9 16h11M9 20h11" stroke="#3c4f68" strokeWidth="1.500" />
                </Icon>
              </Tool>
              <Tool aria-label="单位">
                <Icon w={34} h={32} box="0 0 34 32">
                  <path d="M1 1h7v28H1z" fill="#f5a12c" stroke="#8a4e14" /><path d="M5 5h3M4 9h4M5 13h3M4 17h4M5 21h3M4 25h4" stroke="#6c3a0e" />
                  <g fontFamily="Open Sans, sans-serif" fontWeight="700" fontSize="14"><text x="10" y="13">in</text><text x="9" y="26" fontSize="12">mm</text></g>
                </Icon>
              </Tool>
              <Sep />
              <Tool aria-label="距离">
                <Icon w={22} h={22} box="0 0 22 22"><path d="M3 3l16 16" stroke="#27306b" strokeWidth="2" /><circle cx="3" cy="3" r="2.500" fill="#d13b2c" /><circle cx="19" cy="19" r="2.500" fill="#d13b2c" /></Icon>
              </Tool>
              <Tool aria-label="智能测量">
                <SplitFace>
                  <Icon w={28} h={30} box="0 0 28 30">
                    <path d="M2 10v12M26 10v12M2 10h24" stroke="#54413a" strokeWidth="1.500" strokeDasharray="3 2" />
                    <path d="M1 21h26v7H1z" fill="#ffe08a" stroke="#a8702a" /><path d="M5 28v-4M9 28v-4M13 28v-4M17 28v-4M21 28v-4" stroke="#a8702a" />
                    <path d="M12 2h8l-5 6h5L9 18l3-8H8z" fill="#ffd83a" stroke="#c88a1c" />
                    <circle cx="2" cy="10" r="2" fill="#c9382a" /><circle cx="26" cy="10" r="2" fill="#c9382a" />
                  </Icon>
                </SplitFace>
                <i />
              </Tool>
              <Sep />
              <Tool aria-label="角度">
                <Icon w={24} h={26} box="0 0 24 26"><path d="M3 21L12 5l8 19" fill="none" stroke="#27306b" strokeWidth="2" /><circle cx="12" cy="5" r="4" fill="#ddd" stroke="#888" /><circle cx="12" cy="5" r="2" fill="#d13b2c" /><circle cx="3" cy="21" r="2" fill="#27306b" /><circle cx="20" cy="23" r="2" fill="#27306b" /></Icon>
              </Tool>
              <Tool $off disabled aria-label="坐标角度">
                <Icon w={26} h={26} box="0 0 26 26"><g fill="none" stroke="#9c9c9c" strokeWidth="2"><path d="M7 15L14 2l8 21" /><circle cx="6" cy="14" r="4" /><path d="M10 12v12l3-3 2 4 2-1-2-4h4z" fill="#f2f2f2" strokeWidth="1" /></g></Icon>
              </Tool>
              <Sep />
              <Picker>
                <select aria-label="选择类型"><option>关键点</option></select>
                <Chevron />
              </Picker>
              <Sep />
              <Tool aria-label="直线">
                <Icon w={20} h={20} box={B20}><path d="M2 18L17 3" stroke="#111" strokeWidth="2" /><circle cx="17" cy="3" r="2.500" fill="#d13b2c" /></Icon>
              </Tool>
              <Sep />
              <LatinPicker>
                <select aria-label="坐标系"><option>Base</option></select>
                <Chevron />
              </LatinPicker>
              <Sep />
              <Tool aria-label="显示标签">
                <Icon w={28} h={26} box="0 0 28 26"><path d="M1 1l4 4h22v5H5l-4 4z" fill="#4a93c0" /><path d="M5 1h22v4H5z" fill="#f0962a" stroke="#9b5a1a" /><path d="M5 5h22v5H5z" fill="#fff" stroke="#4b6d8d" /><path d="M1 15l4 4-4 5" fill="none" stroke="#567" /><path d="M5 16h22v8H5z" fill="#eef" stroke="#666" strokeWidth="1.500" /><path d="M9 20h8" stroke="#345" strokeWidth="3" strokeDasharray="2 1" /></Icon>
              </Tool>
              <Tool aria-label="选择变量">
                <Icon w={26} h={24} box="0 0 26 24"><path d="M1 2h22v13H1z" fill="#fff" stroke="#2b6a9c" strokeWidth="2" /><text x="3" y="13" fontSize="11" fontFamily="Liberation Mono, monospace">X1=</text><path d="M16 9v12l3-2 2 4 2-1-2-4h4z" fill="#fff" stroke="#111" /></Icon>
              </Tool>
              <ResetButton>重置</ResetButton>
            </MeasureBar>

            {callouts.map((c) => (
              <Callout key={c.id} $x={c.x} $y={c.y} $head={c.head}>
                <div><Dots $color={c.dots} /></div>
                <CalloutField $pad={c.pad}>
                  <span>{c.id === "dist" ? <>{c.label}<Mono>:</Mono></> : <Mono>{c.label}:</Mono>}</span>
                  <input readOnly value={c.value} />
                </CalloutField>
              </Callout>
            ))}
            <Status>未选择顶层零件。</Status>
          </Frame>
        </Docs>
      </Body>
    </Shell>
  );
}
